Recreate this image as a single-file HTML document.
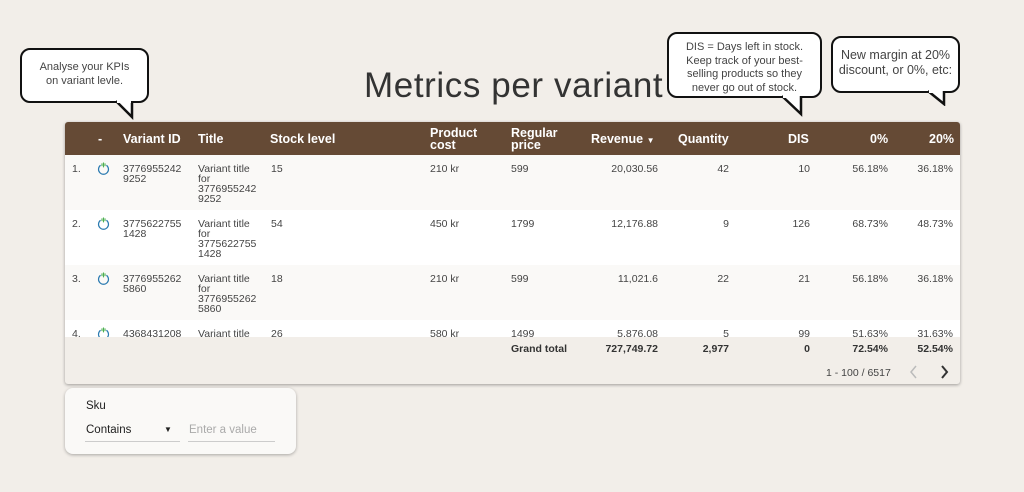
<!DOCTYPE html>
<html><head><style>
*{margin:0;padding:0;box-sizing:border-box}
body{width:1024px;height:492px;background:#f2eee9;font-family:"Liberation Sans",sans-serif;position:relative;overflow:hidden;color:#333}
.a{position:absolute;white-space:nowrap}
.bub{position:absolute;background:#fff;border:2.5px solid #111;border-radius:10px;font-size:11px;color:#444;text-align:center;line-height:13.5px;font-family:"Liberation Sans",sans-serif}
h1{position:absolute;left:364px;top:66px;font-size:35px;font-weight:normal;color:#333;font-family:"Liberation Sans",sans-serif;letter-spacing:0.6px}
.tbl{position:absolute;left:65px;top:122px;width:895px;height:262px;background:#f2eee9;box-shadow:0 1px 3px rgba(0,0,0,.35);border-radius:3px;overflow:hidden}
.hd{position:absolute;left:0;top:0;width:895px;height:33px;background:#654a35;color:#fff;font-weight:bold;font-size:12.5px;font-family:"Liberation Sans",sans-serif}
.hd div{position:absolute;line-height:12px}
.row{position:absolute;left:0;width:895px;height:55px;font-size:10.5px;color:#444}
.row div{position:absolute;top:9px;line-height:10px}
.r{text-align:right}
.ic{width:13px;height:13px}
</style></head><body>
<div class="bub" style="left:20px;top:48px;width:129px;height:55px;padding-top:11px">Analyse your KPIs<br>on variant levle.</div>
<svg class="a" style="left:112px;top:100px" width="24" height="20"><path d="M4 1 L20 17 L20 1" fill="#fff" stroke="#111" stroke-width="2.5"/><rect x="5" y="0" width="14" height="3" fill="#fff"/></svg>
<h1>Metrics per variant</h1>
<div class="bub" style="left:667px;top:32px;width:155px;height:66px;padding-top:7px">DIS = Days left in stock.<br>Keep track of your best-<br>selling products so they<br>never go out of stock.</div>
<svg class="a" style="left:780px;top:95px" width="24" height="22"><path d="M2 1 L21 19 L21 1" fill="#fff" stroke="#111" stroke-width="2.5"/><rect x="3" y="0" width="16" height="3" fill="#fff"/></svg>
<div class="bub" style="left:831px;top:36px;width:129px;height:57px;padding-top:10px;font-size:12.5px;line-height:15px">New margin at 20%<br>discount, or 0%, etc:</div>
<svg class="a" style="left:926px;top:90px" width="24" height="16"><path d="M2 1 L18 14 L18 1" fill="#fff" stroke="#111" stroke-width="2.5"/><rect x="3" y="0" width="13" height="3" fill="#fff"/></svg>

<div class="tbl">
<div class="hd">
<div style="left:33px;top:11px">-</div>
<div style="left:58px;top:11px">Variant ID</div>
<div style="left:133px;top:11px">Title</div>
<div style="left:205px;top:11px">Stock level</div>
<div style="left:365px;top:5px">Product<br>cost</div>
<div style="left:446px;top:5px">Regular<br>price</div>
<div style="left:526px;top:11px">Revenue <span style="font-size:8px">▼</span></div>
<div style="left:613px;top:11px">Quantity</div>
<div style="left:723px;top:11px">DIS</div>
<div style="left:805px;top:11px">0%</div>
<div style="left:864px;top:11px">20%</div>
</div>
<div class="row" style="top:33px;background:#faf9f7">
<div style="left:7px">1.</div><div style="left:32px;top:7px"><svg class="ic" viewBox="0 0 12 12"><path d="M3.3 3 A4.6 4.6 0 1 0 8.7 3" fill="none" stroke="#2a7ab0" stroke-width="1.1"/><path d="M6 0.5V5M4.6 1.3v2.5M7.4 1.3v2.5" stroke="#4caf50" stroke-width="1"/></svg></div>
<div style="left:58px">3776955242<br>9252</div><div style="left:133px">Variant title<br>for<br>3776955242<br>9252</div><div style="left:206px">15</div><div style="left:365px">210 kr</div><div style="left:446px">599</div>
<div class="r" style="right:302px">20,030.56</div><div class="r" style="right:231px">42</div><div class="r" style="right:150px">10</div><div class="r" style="right:72px">56.18%</div><div class="r" style="right:7px">36.18%</div></div>
<div class="row" style="top:88px;background:#fff">
<div style="left:7px">2.</div><div style="left:32px;top:7px"><svg class="ic" viewBox="0 0 12 12"><path d="M3.3 3 A4.6 4.6 0 1 0 8.7 3" fill="none" stroke="#2a7ab0" stroke-width="1.1"/><path d="M6 0.5V5M4.6 1.3v2.5M7.4 1.3v2.5" stroke="#4caf50" stroke-width="1"/></svg></div>
<div style="left:58px">3775622755<br>1428</div><div style="left:133px">Variant title<br>for<br>3775622755<br>1428</div><div style="left:206px">54</div><div style="left:365px">450 kr</div><div style="left:446px">1799</div>
<div class="r" style="right:302px">12,176.88</div><div class="r" style="right:231px">9</div><div class="r" style="right:150px">126</div><div class="r" style="right:72px">68.73%</div><div class="r" style="right:7px">48.73%</div></div>
<div class="row" style="top:143px;background:#faf9f7">
<div style="left:7px">3.</div><div style="left:32px;top:7px"><svg class="ic" viewBox="0 0 12 12"><path d="M3.3 3 A4.6 4.6 0 1 0 8.7 3" fill="none" stroke="#2a7ab0" stroke-width="1.1"/><path d="M6 0.5V5M4.6 1.3v2.5M7.4 1.3v2.5" stroke="#4caf50" stroke-width="1"/></svg></div>
<div style="left:58px">3776955262<br>5860</div><div style="left:133px">Variant title<br>for<br>3776955262<br>5860</div><div style="left:206px">18</div><div style="left:365px">210 kr</div><div style="left:446px">599</div>
<div class="r" style="right:302px">11,021.6</div><div class="r" style="right:231px">22</div><div class="r" style="right:150px">21</div><div class="r" style="right:72px">56.18%</div><div class="r" style="right:7px">36.18%</div></div>
<div class="row" style="top:198px;height:17px;background:#fff;overflow:hidden">
<div style="left:7px">4.</div><div style="left:32px;top:7px"><svg class="ic" viewBox="0 0 12 12"><path d="M3.3 3 A4.6 4.6 0 1 0 8.7 3" fill="none" stroke="#2a7ab0" stroke-width="1.1"/><path d="M6 0.5V5M4.6 1.3v2.5M7.4 1.3v2.5" stroke="#4caf50" stroke-width="1"/></svg></div>
<div style="left:58px">4368431208</div><div style="left:133px">Variant title</div><div style="left:206px">26</div><div style="left:365px">580 kr</div><div style="left:446px">1499</div>
<div class="r" style="right:302px">5,876.08</div><div class="r" style="right:231px">5</div><div class="r" style="right:150px">99</div><div class="r" style="right:72px">51.63%</div><div class="r" style="right:7px">31.63%</div></div>
<div class="row" style="top:215px;height:25px;font-weight:bold;color:#333">
<div style="left:446px;top:7px">Grand total</div><div class="r" style="right:302px;top:7px">727,749.72</div><div class="r" style="right:231px;top:7px">2,977</div><div class="r" style="right:150px;top:7px">0</div><div class="r" style="right:72px;top:7px">72.54%</div><div class="r" style="right:7px;top:7px">52.54%</div></div>
<div class="a" style="left:761px;top:245px;font-size:10.5px;color:#444">1 - 100 / 6517</div>
<svg class="a" style="left:843px;top:242px" width="12" height="16"><path d="M8 2 L3 8 L8 14" fill="none" stroke="#bbb" stroke-width="1.5"/></svg>
<svg class="a" style="left:873px;top:242px" width="12" height="16"><path d="M4 2 L9 8 L4 14" fill="none" stroke="#333" stroke-width="2"/></svg>
</div>

<div class="a" style="left:65px;top:388px;width:231px;height:66px;background:#faf9f7;border-radius:8px;box-shadow:0 1px 3px rgba(0,0,0,.3)"></div>
<div class="a" style="left:86px;top:400px;font-size:11.5px;color:#222">Sku</div>
<div class="a" style="left:86px;top:424px;font-size:11.5px;color:#222">Contains</div>
<div class="a" style="left:164px;top:425px;font-size:8px;color:#222">▼</div>
<div class="a" style="left:85px;top:441px;width:95px;height:1px;background:#ccc"></div>
<div class="a" style="left:189px;top:424px;font-size:11.5px;color:#aaa">Enter a value</div>
<div class="a" style="left:188px;top:441px;width:87px;height:1px;background:#ccc"></div>
</body></html>
